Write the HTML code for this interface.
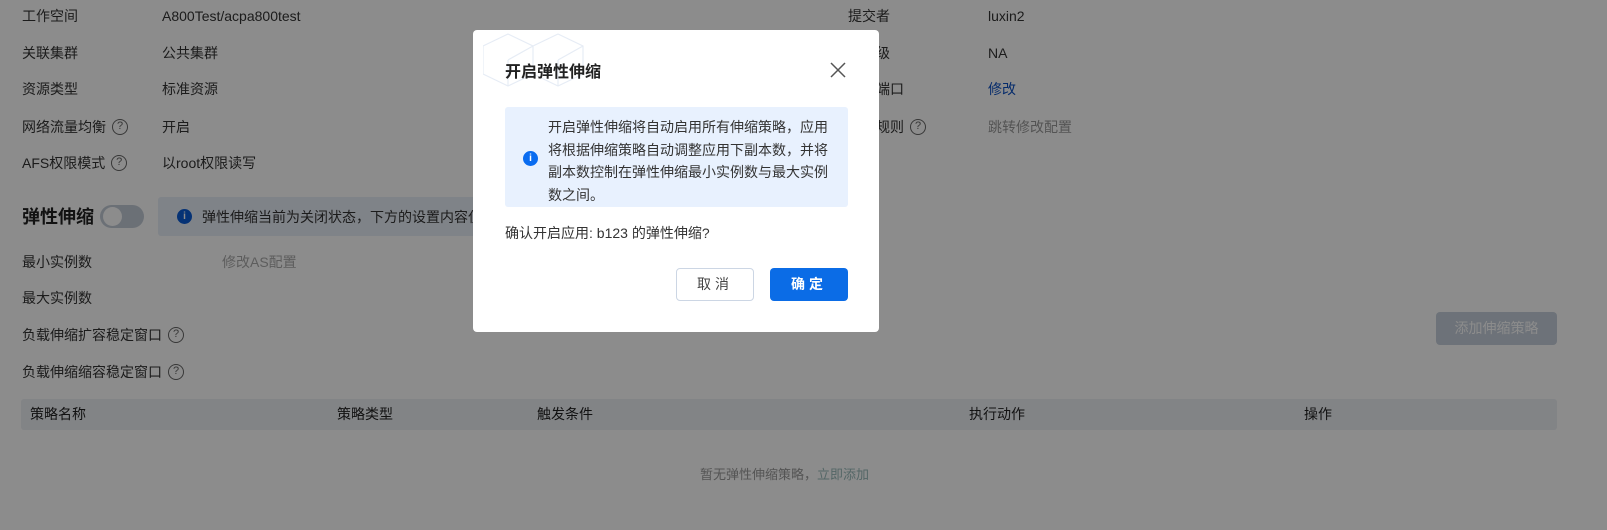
<!DOCTYPE html>
<html><head><meta charset="utf-8"><style>
*{margin:0;padding:0;box-sizing:border-box}
body{width:1607px;height:530px;overflow:hidden;background:#fff;font-family:"Liberation Sans","Noto Sans CJK SC",sans-serif;font-size:14px;color:#333;position:relative}
.a{position:absolute;white-space:nowrap;line-height:20px}
.q{display:inline-block;width:16px;height:16px;border:1.3px solid #666;border-radius:50%;font-size:11px;line-height:13px;text-align:center;color:#666;vertical-align:top;margin-top:2px;margin-left:6px}
.ov{position:absolute;left:0;top:0;width:1607px;height:530px;background:rgba(0,0,0,0.45)}
.m{position:absolute;left:473px;top:30px;width:406px;height:302px;background:#fff;border-radius:4px;overflow:hidden}
</style></head><body>
<div class="a" style="left:22px;top:6px">工作空间</div><div class="a" style="left:162px;top:6px">A800Test/acpa800test</div>
<div class="a" style="left:22px;top:43px">关联集群</div><div class="a" style="left:162px;top:43px">公共集群</div>
<div class="a" style="left:22px;top:79px">资源类型</div><div class="a" style="left:162px;top:79px">标准资源</div>
<div class="a" style="left:22px;top:117px">网络流量均衡<span class="q">?</span></div><div class="a" style="left:162px;top:117px">开启</div>
<div class="a" style="left:22px;top:153px">AFS权限模式<span class="q">?</span></div><div class="a" style="left:162px;top:153px">以root权限读写</div>
<div class="a" style="left:848px;top:6px">提交者</div><div class="a" style="left:988px;top:6px">luxin2</div>
<div class="a" style="left:848px;top:43px">优先级</div><div class="a" style="left:988px;top:43px">NA</div>
<div class="a" style="left:848px;top:79px">服务端口</div><div class="a" style="left:988px;top:79px;color:#0a4fc4">修改</div>
<div class="a" style="left:848px;top:117px">访问规则<span class="q">?</span></div><div class="a" style="left:988px;top:117px;color:#999">跳转修改配置</div>
<div class="a" style="left:22px;top:205px;font-size:18px;font-weight:bold;line-height:24px;color:#222">弹性伸缩</div>
<div style="position:absolute;left:100px;top:205px;width:44px;height:23px;border-radius:12px;background:#c4ccd8"><div style="position:absolute;left:3px;top:2px;width:19px;height:19px;border-radius:50%;background:#fff"></div></div>
<div style="position:absolute;left:158px;top:197px;width:700px;height:39px;background:#e8eef8;border-radius:3px"></div>
<div style="position:absolute;left:177px;top:209px;width:15px;height:15px;border-radius:50%;background:#0a5bd6;color:#fff;font-size:10px;text-align:center;line-height:15px;font-weight:bold">i</div>
<div class="a" style="left:202px;top:207px">弹性伸缩当前为关闭状态，下方的设置内容仅供查看</div>
<div class="a" style="left:22px;top:252px">最小实例数</div><div class="a" style="left:222px;top:252px;color:#aaa">修改AS配置</div>
<div class="a" style="left:22px;top:288px">最大实例数</div>
<div class="a" style="left:22px;top:325px">负载伸缩扩容稳定窗口<span class="q">?</span></div>
<div class="a" style="left:22px;top:362px">负载伸缩缩容稳定窗口<span class="q">?</span></div>
<div style="position:absolute;left:1436px;top:312px;width:121px;height:33px;background:#c7d0dc;border-radius:4px;color:#fff;text-align:center;line-height:33px">添加伸缩策略</div>
<div style="position:absolute;left:21px;top:399px;width:1536px;height:31px;background:#edf0f5;border-radius:3px"></div>
<div class="a" style="left:30px;top:404px;color:#222">策略名称</div>
<div class="a" style="left:337px;top:404px;color:#222">策略类型</div>
<div class="a" style="left:537px;top:404px;color:#222">触发条件</div>
<div class="a" style="left:969px;top:404px;color:#222">执行动作</div>
<div class="a" style="left:1304px;top:404px;color:#222">操作</div>
<div class="a" style="left:700px;top:465px;color:#999;font-size:13px">暂无弹性伸缩策略，<span style="color:#9bb">立即添加</span></div>
<div class="ov"></div>
<div class="m">
<svg style="position:absolute;left:10px;top:0" width="110" height="70" fill="none" stroke="#e6ecf5" stroke-width="1.2"><path d="M25 4 L50 16 L50 44 L25 56 L0 44 L0 16 Z M50 16 L75 4 L100 16 L100 44 L75 56 L50 44 M25 30 L50 16 M75 30 L100 16 M75 30 L75 56 M25 30 L25 56"/></svg>
<div class="a" style="left:32px;top:32px;font-size:16px;font-weight:bold;color:#222;line-height:22px">开启弹性伸缩</div>
<svg style="position:absolute;left:356px;top:31px" width="18" height="18" stroke="#555" stroke-width="1.5"><path d="M2 2L16 16M16 2L2 16"/></svg>
<div style="position:absolute;left:32px;top:77px;width:343px;height:100px;background:#e8f1fe;border-radius:3px"></div>
<div style="position:absolute;left:50px;top:121px;width:15px;height:15px;border-radius:50%;background:#0a6cf0;color:#fff;font-size:10px;text-align:center;line-height:15px;font-weight:bold">i</div>
<div style="position:absolute;left:75px;top:86px;width:290px;line-height:22.5px;color:#333">开启弹性伸缩将自动启用所有伸缩策略，应用将根据伸缩策略自动调整应用下副本数，并将副本数控制在弹性伸缩最小实例数与最大实例数之间。</div>
<div class="a" style="left:32px;top:193px;color:#333">确认开启应用: b123 的弹性伸缩?</div>
<div style="position:absolute;left:203px;top:238px;width:78px;height:33px;border:1px solid #ccd6e4;border-radius:4px;text-align:center;line-height:31px;color:#444;letter-spacing:4px">取消</div>
<div style="position:absolute;left:297px;top:238px;width:78px;height:33px;background:#0b6ce6;border-radius:4px;text-align:center;line-height:33px;color:#fff;font-weight:bold;letter-spacing:4px">确定</div>
</div>
</body></html>
